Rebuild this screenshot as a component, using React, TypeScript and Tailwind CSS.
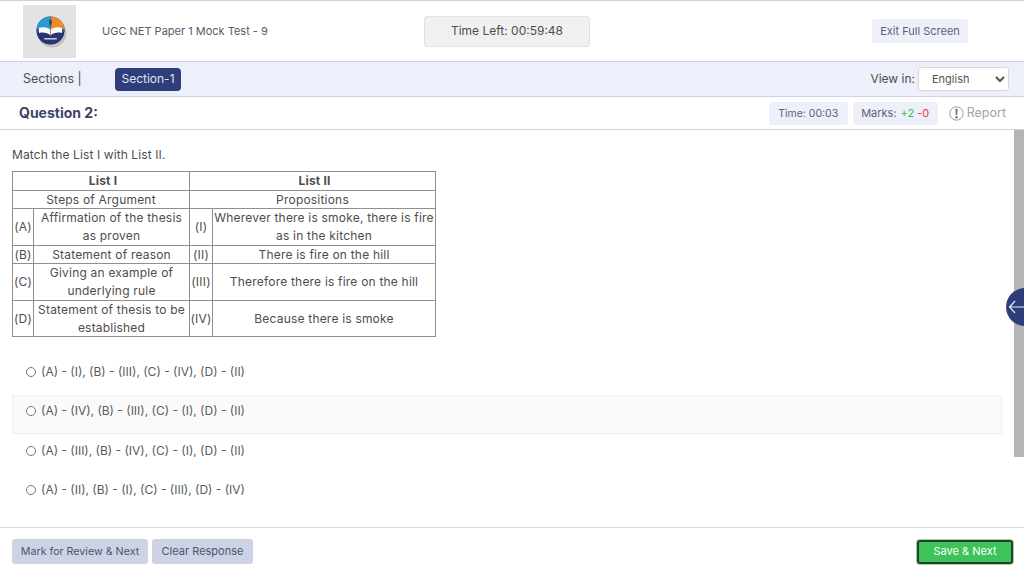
import { ReactNode } from "react";

const font = "font-['Inter','Noto_Sans',sans-serif]";

const options = [
  "(A) - (I), (B) - (III), (C) - (IV), (D) - (II)",
  "(A) - (IV), (B) - (III), (C) - (I), (D) - (II)",
  "(A) - (III), (B) - (IV), (C) - (I), (D) - (II)",
  "(A) - (II), (B) - (I), (C) - (III), (D) - (IV)",
];

const Cell = ({ children, className = "", colSpan }: { children: ReactNode; className?: string; colSpan?: number }) => (
  <td colSpan={colSpan} className={`border border-[#8f8f8f] text-center align-middle p-0 ${className}`}>
    {children}
  </td>
);

const Logo = () => (
  <div className="w-[53px] h-[53px] bg-[#e3e3e3] flex items-center justify-center">
    <svg width="36" height="36" viewBox="0 0 36 36" className="blur-[0.3px]">
      <circle cx="20" cy="20" r="14.500" fill="#a8a8a8" opacity="0.55" />
      <circle cx="18.500" cy="17.500" r="14" fill="#2a3570" />
      <path d="M18.500 3.500a14 14 0 0 1 14 14h-14z" fill="#ee8a2c" />
      <path d="M18.500 3.500a14 14 0 0 0-14 14h14z" fill="#2b9ad1" />
      <path d="M4.800 16h27.400l.3 3h-28z" fill="#2b5f9f" />
      <path d="M7 15c4-1.500 9-1 11.500 2 2.500-3 7.500-3.500 11.500-2v5c-4-1-8.500-.5-11.500 2.500-3-3-7.500-3.500-11.500-2.500z" fill="#fff" />
      <path d="M18.500 17v5" stroke="#d8443c" strokeWidth="0.800" />
      <path d="M17.500 6.500h2l.5 3-1.500 5-1.500-5z" fill="#24506b" />
      <path d="M5 21c4.500-1 10 0 13.500 3 3.500-3 9-4 13.500-3a14 14 0 0 1-27 0z" fill="#2a3570" />
      <rect x="12" y="25" width="13" height="1.500" rx="0.700" fill="#c9d0e6" />
    </svg>
  </div>
);

export default function App() {
  return (
    <div className={`${font} w-[1024px] h-[575px] overflow-hidden bg-white flex flex-col text-[#4d4d4d] relative`}>
      <header className="h-[62px] shrink-0 border-y border-[#c9d3e8] flex items-center">
        <div className="w-[424px] flex items-center pl-[23px]">
          <Logo />
          <span className="ml-[26px] text-[11px] text-[#555b6b]">UGC NET Paper 1 Mock Test - 9</span>
        </div>
        <div className="w-[166px] h-[31px] bg-[#f0f0f0] border border-[#e2e2e2] rounded-[3px] flex items-center justify-center text-[12px] text-[#4d4d4d]">
          Time Left: 00:59:48
        </div>
        <div className="ml-[282px] w-[96px] h-[24px] bg-[#edf0f9] rounded-[3px] flex items-center justify-center text-[11px] text-[#5b6272]">
          Exit Full Screen
        </div>
      </header>

      <div className="h-[35px] shrink-0 bg-[#edf0fa] border-b border-[#c9d3e8] flex items-center pl-[23px] pr-[15px]">
        <span className="text-[12.5px] w-[92px] text-[#4d4d4d]">Sections |</span>
        <span className="w-[66px] h-[23px] rounded-[4px] bg-[#2f3e7a] text-[#dfe4f2] text-[12px] flex items-center justify-center">Section-1</span>
        <span className="ml-auto mr-[3px] text-[12px] text-[#4d4d4d]">View in:</span>
        <select defaultValue="English" className="w-[91px] h-[24px] bg-white border border-[#d8d8d8] rounded-[3px] pl-[9px] text-[11px] text-[#555]">
          <option>English</option>
        </select>
      </div>

      <div className="h-[33px] shrink-0 border-b border-[#c9d3e8] flex items-center pl-[19px] pr-[18px]">
        <span className="text-[14px] font-bold text-[#3d4468] pb-[1px]">Question 2:</span>
        <span className="ml-auto w-[79px] h-[23px] pt-[1px] rounded-[3px] bg-[#edf0f9] text-[10.5px] flex items-center justify-center text-[#5b6272]">Time: 00:03</span>
        <span className="ml-[5px] w-[85px] h-[23px] pt-[1px] rounded-[3px] bg-[#edf0f9] text-[11px] flex items-center justify-center gap-1 text-[#5b6272]">
          Marks: <span className="text-[#2fc24a]">+2</span> <span className="text-[#ff3344] -ml-[1px]">-0</span>
        </span>
        <span className="ml-[11px] flex items-center gap-[3px] text-[12.5px] text-[#a3a3a3]">
          <svg width="15" height="15" viewBox="0 0 15 15">
            <circle cx="7.500" cy="7.500" r="6.700" fill="none" stroke="#9c9c9c" strokeWidth="1" />
            <path d="M6.300 2.800h2.400l-.5 6.400H6.800z" fill="#777" />
            <circle cx="7.500" cy="11.300" r="1.200" fill="#777" />
          </svg>
          Report
        </span>
      </div>

      <div className="flex-1 flex min-h-0">
        <main className="flex-1 min-w-0 pl-3 pr-3 pt-[16px] text-[12px]">
          <p className="leading-[18px] text-[#4d4d4d] tracking-[0.1px]">Match the List I with List II.</p>
          <table className="mt-[7px] w-[423px] border-collapse table-fixed text-[12px] tracking-[0.2px] leading-[18px] text-[#4d4d4d]">
            <colgroup>
              <col className="w-[21px]" />
              <col className="w-[156px]" />
              <col className="w-[23px]" />
              <col className="w-[223px]" />
            </colgroup>
            <tbody>
              <tr className="h-[19px]">
                <Cell colSpan={2} className="font-bold pl-1">List I</Cell>
                <Cell colSpan={2} className="font-bold pl-1">List II</Cell>
              </tr>
              <tr>
                <Cell colSpan={2} className="leading-[17px]">Steps of Argument</Cell>
                <Cell colSpan={2} className="leading-[17px]">Propositions</Cell>
              </tr>
              <tr className="h-[37px]">
                <Cell>(A)</Cell>
                <Cell>Affirmation of the thesis as proven</Cell>
                <Cell>(I)</Cell>
                <Cell>Wherever there is smoke, there is fire as in the kitchen</Cell>
              </tr>
              <tr>
                <Cell className="leading-[17px]">(B)</Cell>
                <Cell className="leading-[17px]">Statement of reason</Cell>
                <Cell className="leading-[17px]">(II)</Cell>
                <Cell className="leading-[17px]">There is fire on the hill</Cell>
              </tr>
              <tr className="h-[37px]">
                <Cell>(C)</Cell>
                <Cell>Giving an example of underlying rule</Cell>
                <Cell>(III)</Cell>
                <Cell>Therefore there is fire on the hill</Cell>
              </tr>
              <tr className="h-[36px]">
                <Cell className="leading-[17.5px]">(D)</Cell>
                <Cell className="leading-[17.5px]">Statement of thesis to be established</Cell>
                <Cell className="leading-[17.5px]">(IV)</Cell>
                <Cell className="leading-[17.5px]">Because there is smoke</Cell>
              </tr>
            </tbody>
          </table>

          <div className="mt-[18px]">
            {options.map((o, i) => (
              <label
                key={o}
                className={`h-[39.5px] pb-[6px] flex items-center pl-[13px] border ${i === 1 ? "bg-[#fafafa] border-[#f0f0f0]" : "border-transparent"} text-[12px] text-[#5a5a5a]`}
              >
                <span className="w-[10px] h-[10px] rounded-full border border-[#777] bg-white mr-[5px] shrink-0" />
                {o}
              </label>
            ))}
          </div>
        </main>
        <div className="w-[10px] shrink-0">
          <div className="h-[327px] bg-[#b5b5b5]" />
        </div>
      </div>

      <footer className="h-[48px] shrink-0 border-t border-[#dcdce6] flex items-center pl-3 pr-[11px]">
        <button className="w-[136px] h-[25px] pt-[1px] rounded-[3px] bg-[#cdd3e4] text-[10.700px] text-[#4e5470]">Mark for Review &amp; Next</button>
        <button className="ml-1 w-[101px] h-[25px] rounded-[3px] bg-[#cdd3e4] text-[11px] text-[#4e5470]">Clear Response</button>
        <button className="ml-auto w-[96px] h-[24px] rounded-[3px] bg-[#3cc45a] border-2 border-[#2c3a32] ring-1 ring-[#8fe0a0] text-[11px] text-white">Save &amp; Next</button>
      </footer>

      <div className="absolute left-[1006px] top-[288px] w-[38px] h-[38px] rounded-full bg-[#2f3e7a] flex items-center pl-[2px]">
        <svg width="18" height="14" viewBox="0 0 18 14" fill="none" stroke="#e6e9f5" strokeWidth="1.200">
          <path d="M7 1 1.500 7 7 13M1.500 7H18" />
        </svg>
      </div>
    </div>
  );
}
